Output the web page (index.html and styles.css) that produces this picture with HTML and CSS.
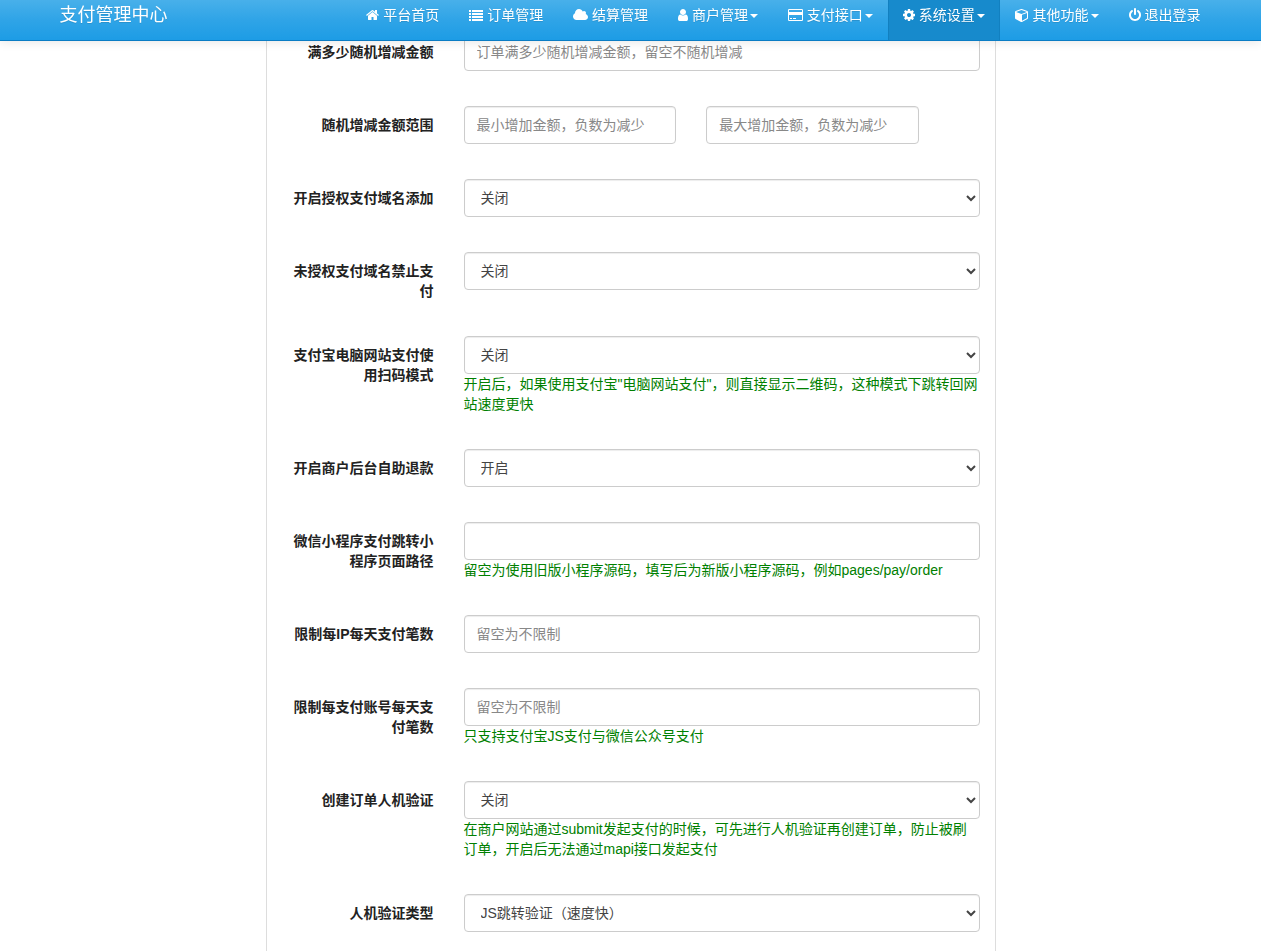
FILE: index.html
```html
<!DOCTYPE html>
<html lang="zh-CN">
<head>
  <meta charset="UTF-8">
  <meta name="viewport" content="width=device-width, initial-scale=1">
  <title>支付管理中心</title>
  <link rel="stylesheet" href="styles.css">
</head>
<body>
  <!-- 顶部导航 -->
  <nav class="navbar">
    <div class="container">
      <a class="navbar-brand" href="#">支付管理中心</a>
      <ul class="navbar-nav">
        <li><a href="#"><svg class="icon" width="13" height="14" viewBox="64 0 1664 1792"><path d="M1472 992v480q0 26-19 45t-45 19h-384v-384h-256v384h-384q-26 0-45-19t-19-45v-480q0-1 .5-3t.5-3l575-474 575 474q1 2 1 6zm223-69l-62 74q-8 9-21 11h-3q-13 0-21-7l-692-577-692 577q-12 8-24 7-13-2-21-11l-62-74q-8-10-7-23.5t11-21.5l719-599q32-26 76-26t76 26l244 204v-195q0-14 9-23t23-9h192q14 0 23 9t9 23v408l219 182q10 8 11 21.5t-7 23.5z"/></svg> 平台首页</a></li>
        <li><a href="#"><svg class="icon" width="14" height="14" viewBox="0 0 14 14"><path d="M0 2h2v2H0zM3 2h11v2H3zM0 5h2v2H0zM3 5h11v2H3zM0 8h2v2H0zM3 8h11v2H3zM0 11h2v2H0zM3 11h11v2H3z"/></svg> 订单管理</a></li>
        <li><a href="#"><svg class="icon" width="15" height="14" viewBox="64 0 1920 1792"><path d="M1984 1152q0 159-112.5 271.5t-271.5 112.5h-1088q-185 0-316.5-131.5t-131.5-316.5q0-132 71-241.5t187-163.5q-2-28-2-43 0-212 150-362t362-150q158 0 286.5 88t187.5 230q70-62 166-62 106 0 181 75t75 181q0 75-41 138 129 30 213 134.5t84 239.5z"/></svg> 结算管理</a></li>
        <li><a href="#"><svg class="icon" width="10" height="14" viewBox="256 0 1280 1792"><path d="M1536 1399q0 109-62.5 187t-150.5 78h-854q-88 0-150.5-78t-62.5-187q0-85 8.5-160.5t31.5-152 58.5-131 94-89 134.5-34.5q131 128 313 128t313-128q76 0 134.5 34.5t94 89 58.5 131 31.5 152 8.5 160.5zm-256-887q0 159-112.5 271.5t-271.5 112.5-271.5-112.5-112.5-271.5 112.5-271.5 271.5-112.5 271.5 112.5 112.5 271.5z"/></svg> 商户管理<span class="caret"></span></a></li>
        <li><a href="#"><svg class="icon" width="15" height="14" viewBox="0 0 15 14"><path fill-rule="evenodd" d="M1.2 1h12.6Q15 1 15 2.2v9.6Q15 13 13.8 13H1.2Q0 13 0 11.8V2.2Q0 1 1.2 1zM1 2v2h13V2zM1 7v5h13V7zM2 10h2v1H2zM5 10h3v1H5z"/></svg> 支付接口<span class="caret"></span></a></li>
        <li class="active"><a href="#"><svg class="icon" width="12" height="14" viewBox="128 0 1536 1792"><path d="M1152 896q0-106-75-181t-181-75-181 75-75 181 75 181 181 75 181-75 75-181zm512-109v222q0 12-8 23t-20 13l-185 28q-19 54-39 91 35 50 107 138 10 12 10 25t-9 23q-27 37-99 108t-94 71q-12 0-26-9l-138-108q-44 23-91 38-16 136-29 186-7 28-36 28h-222q-14 0-24.5-8.5t-11.5-21.5l-28-184q-49-16-90-37l-141 107q-10 9-25 9-14 0-25-11-126-114-165-168-7-10-7-23 0-12 8-23 15-21 51-66.5t54-70.5q-27-50-41-99l-183-27q-13-2-21-12.5t-8-23.5v-222q0-12 8-23t19-13l186-28q14-46 39-92-40-57-107-138-10-12-10-24 0-10 9-23 26-36 98.5-107.5t94.5-71.5q13 0 26 10l138 107q44-23 91-38 16-136 29-186 7-28 36-28h222q14 0 24.5 8.5t11.5 21.5l28 184q49 16 90 37l142-107q9-9 24-9 13 0 25 10 129 119 165 170 7 8 7 22 0 12-8 23-15 21-51 66.5t-54 70.5q26 50 41 98l183 28q13 2 21 12.5t8 23.5z"/></svg> 系统设置<span class="caret"></span></a></li>
        <li><a href="#"><svg class="icon" width="14" height="14" viewBox="0 0 1792 1792"><path d="M896 1629l640-349v-636l-640 233v752zm-64-865l698-254-698-254-698 254zm832-252v768q0 35-18 65t-49 47l-704 384q-28 16-61 16t-61-16l-704-384q-31-17-49-47t-18-65v-768q0-40 23-73t61-47l704-256q22-8 44-8t44 8l704 256q38 14 61 47t23 73z"/></svg> 其他功能<span class="caret"></span></a></li>
        <li><a href="#"><svg class="icon" width="12" height="14" viewBox="128 0 1536 1792"><path d="M1664 896q0 156-61 298t-164 245-245 164-298 61-298-61-245-164-164-245-61-298q0-182 80.5-343t226.5-270q43-32 95.5-25t83.5 50q32 42 24.5 94.5t-49.5 84.5q-98 74-151.5 181t-53.5 228q0 104 40.5 198.5t109.5 163.5 163.5 109.5 198.5 40.5 198.5-40.5 163.5-109.5 109.5-163.5 40.5-198.5q0-121-53.5-228t-151.5-181q-42-32-49.5-84.5t24.5-94.5q31-43 84-50t95 25q146 109 226.5 270t80.5 343zm-640-768v640q0 52-38 90t-90 38-90-38-38-90v-640q0-52 38-90t90-38 90 38 38 90z"/></svg> 退出登录</a></li>
      </ul>
    </div>
  </nav>

  <!-- 支付设置表单 -->
  <form class="panel">
    <div class="form-group">
      <label for="pay_payaddstart">满多少随机增减金额</label>
      <div class="field">
        <input type="text" id="pay_payaddstart" class="form-control" placeholder="订单满多少随机增减金额，留空不随机增减">
      </div>
    </div>

    <div class="form-group">
      <label for="pay_payaddmin">随机增减金额范围</label>
      <div class="field field-range">
        <input type="text" id="pay_payaddmin" class="form-control" placeholder="最小增加金额，负数为减少">
        <input type="text" id="pay_payaddmax" class="form-control" placeholder="最大增加金额，负数为减少" aria-label="最大增加金额">
      </div>
    </div>

    <div class="form-group">
      <label for="pay_domain_open">开启授权支付域名添加</label>
      <div class="field">
        <select id="pay_domain_open" class="form-control"><option>关闭</option><option>开启</option></select>
      </div>
    </div>

    <div class="form-group">
      <label for="pay_domain_forbid">未授权支付域名禁止支付</label>
      <div class="field">
        <select id="pay_domain_forbid" class="form-control"><option>关闭</option><option>开启</option></select>
      </div>
    </div>

    <div class="form-group">
      <label for="alipay_paymode">支付宝电脑网站支付使用扫码模式</label>
      <div class="field">
        <select id="alipay_paymode" class="form-control"><option>关闭</option><option>开启</option></select>
        <p class="help">开启后，如果使用支付宝"电脑网站支付"，则直接显示二维码，这种模式下跳转回网站速度更快</p>
      </div>
    </div>

    <div class="form-group">
      <label for="user_refund">开启商户后台自助退款</label>
      <div class="field">
        <select id="user_refund" class="form-control"><option>开启</option><option>关闭</option></select>
      </div>
    </div>

    <div class="form-group">
      <label for="wxminipay_path">微信小程序支付跳转小程序页面路径</label>
      <div class="field">
        <input type="text" id="wxminipay_path" class="form-control">
        <p class="help">留空为使用旧版小程序源码，填写后为新版小程序源码，例如pages/pay/order</p>
      </div>
    </div>

    <div class="form-group">
      <label for="pay_iplimit">限制每IP每天支付笔数</label>
      <div class="field">
        <input type="text" id="pay_iplimit" class="form-control" placeholder="留空为不限制">
      </div>
    </div>

    <div class="form-group">
      <label for="pay_userlimit">限制每支付账号每天支付笔数</label>
      <div class="field">
        <input type="text" id="pay_userlimit" class="form-control" placeholder="留空为不限制">
        <p class="help">只支持支付宝JS支付与微信公众号支付</p>
      </div>
    </div>

    <div class="form-group">
      <label for="pay_verify">创建订单人机验证</label>
      <div class="field">
        <select id="pay_verify" class="form-control"><option>关闭</option><option>开启</option></select>
        <p class="help">在商户网站通过submit发起支付的时候，可先进行人机验证再创建订单，防止被刷订单，开启后无法通过mapi接口发起支付</p>
      </div>
    </div>

    <div class="form-group">
      <label for="pay_verify_type">人机验证类型</label>
      <div class="field">
        <select id="pay_verify_type" class="form-control"><option>JS跳转验证（速度快）</option></select>
      </div>
    </div>
  </form>
</body>
</html>
```
FILE: styles.css
```css
* {
  box-sizing: border-box;
}
body {
  margin: 0;
  font-family: "Liberation Sans", "Noto Sans CJK SC", sans-serif;
  font-size: 14px;
  line-height: 20px;
  color: #222;
  background-color: #fff;
}

/* 导航 */
.navbar {
  position: fixed;
  top: 0;
  left: 0;
  right: 0;
  z-index: 10;
  background-image: linear-gradient(#48b0ea, #2fa4e7 50%, #1d9ce5);
  border-bottom: 1px solid #0a7cc4;
  box-shadow: 0 1px 10px rgba(0, 0, 0, 0.1);
}
.container {
  display: flex;
  justify-content: space-between;
  max-width: 1170px;
  margin: 0 auto;
}
.navbar a {
  display: block;
  padding: 5px 15px 15px;
  color: #fff;
  text-decoration: none;
  white-space: nowrap;
  text-shadow: 0 1px 0 rgba(0, 0, 0, 0.1);
}
.navbar .navbar-brand {
  padding-left: 14px;
  font-size: 18px;
}
.navbar-nav {
  display: flex;
  margin: 0;
  padding: 0;
  list-style: none;
}
.navbar-nav a:hover,
.navbar-nav .active a {
  background-color: #178acc;
}
.navbar-nav .active a {
  box-shadow: inset 1px 0 #1280c0, inset -1px 0 #1280c0;
}
.icon {
  fill: currentColor;
  vertical-align: -2px;
}
.caret {
  display: inline-block;
  margin-left: 2px;
  vertical-align: middle;
  border-top: 4px solid;
  border-left: 4px solid transparent;
  border-right: 4px solid transparent;
}

/* 表单 */
.panel {
  display: flex;
  flex-direction: column;
  gap: 35px;
  max-width: 730px;
  min-height: 100vh;
  margin: 0 auto;
  padding: 33px 0 0;
  border: 1px solid #ddd;
  border-width: 0 1px;
}
.form-group {
  display: grid;
  grid-template-columns: 1fr 3fr;
}
label {
  padding: 9px 15px 0;
  font-weight: bold;
  text-align: right;
}
.field {
  padding: 0 15px;
}
.field-range {
  display: grid;
  grid-template-columns: repeat(9, 1fr);
  padding: 0;
}
.field-range .form-control {
  grid-column: span 4;
  width: auto;
  min-width: 0;
  margin: 0 15px;
}
.form-control {
  display: block;
  width: 100%;
  height: 38px;
  padding: 8px 12px;
  font-family: inherit;
  font-size: 14px;
  line-height: 20px;
  color: #444;
  background-color: #fff;
  border: 1px solid #ccc;
  border-radius: 4px;
  box-shadow: inset 0 1px 1px rgba(0, 0, 0, 0.075);
}
.form-control::placeholder {
  color: #888;
}
.help {
  margin: 0;
  color: green;
}
```
